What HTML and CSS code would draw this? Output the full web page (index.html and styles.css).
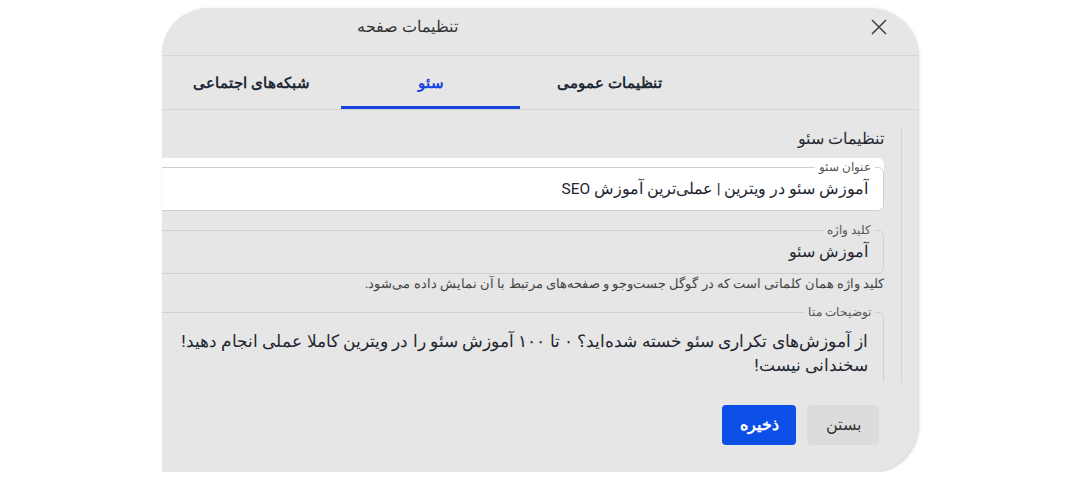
FILE: index.html
```html
<!DOCTYPE html>
<html lang="fa" dir="rtl">
  <head>
    <meta charset="UTF-8" />
    <meta name="viewport" content="width=device-width, initial-scale=1.0" />
    <title>تنظیمات صفحه</title>
    <link rel="stylesheet" href="styles.css">
  </head>
  <body>
    <div class="dialog">
      <div class="dialog-header">
        <button class="close-btn" aria-label="بستن">
          <svg width="18" height="18" viewBox="0 0 18 18">
            <path d="M2 2 L16 16 M16 2 L2 16" stroke="#444" stroke-width="1.6" fill="none" />
          </svg>
        </button>
        <span class="dialog-title">تنظیمات صفحه</span>
      </div>

      <div class="tabs">
        <div class="tab">تنظیمات عمومی</div>
        <div class="tab active">سئو</div>
        <div class="tab">شبکه‌های اجتماعی</div>
      </div>

      <div class="content">
        <h3 class="section-title">تنظیمات سئو</h3>

        <div class="field field-filled">
          <fieldset>
            <legend>عنوان سئو</legend>
            <div class="field-value">آموزش سئو در ویترین | عملی‌ترین آموزش SEO</div>
          </fieldset>
        </div>

        <div class="field">
          <fieldset>
            <legend>کلید واژه</legend>
            <div class="field-value">آموزش سئو</div>
          </fieldset>
          <p class="helper">کلید واژه همان کلماتی است که در گوگل جست‌وجو و صفحه‌های مرتبط با آن نمایش داده می‌شود.</p>
        </div>

        <div class="field">
          <fieldset class="multiline">
            <legend>توضیحات متا</legend>
            <div class="field-value">
              <span class="line">از آموزش‌های تکراری سئو خسته شده‌اید؟ ۰ تا ۱۰۰ آموزش سئو را در ویترین کاملا عملی انجام دهید!</span>
              <span class="line">سخندانی نیست!</span>
            </div>
          </fieldset>
        </div>
      </div>

      <div class="actions">
        <button class="btn btn-light">بستن</button>
        <button class="btn btn-primary">ذخیره</button>
      </div>
    </div>
  </body>
</html>
```

FILE: styles.css
```css
* {
  margin: 0;
  padding: 0;
  box-sizing: border-box;
}
body {
  background: #fff;
  font-family: Roboto, sans-serif;
  color: #1f2630;
  padding: 8px 0 0 162px;
  direction: ltr;
}
.dialog {
  direction: rtl;
  width: 756px;
  height: 464px;
  background: #e6e6e6;
  border-radius: 46px 48px 48px 0;
  box-shadow: 1px 1px 3px rgba(0, 0, 0, 0.18);
  overflow: hidden;
  display: flex;
  flex-direction: column;
}
.dialog-header {
  height: 48px;
  display: flex;
  align-items: center;
  padding-right: 30px;
  padding-bottom: 9px;
  border-bottom: 1px solid #d6d6d6;
}
.close-btn {
  background: none;
  border: none;
  width: 18px;
  height: 18px;
  display: flex;
}
.dialog-title {
  margin-right: 412px;
  font-size: 15.5px;
  color: #333;
}
.tabs {
  height: 54px;
  display: flex;
  padding-right: 219px;
  border-bottom: 1px solid #d4d4d4;
}
.tab {
  width: 181px;
  display: flex;
  align-items: center;
  justify-content: center;
  font-size: 15px;
  font-weight: bold;
  color: #1f2a37;
  border-bottom: 3px solid transparent;
  padding-top: 3px;
}
.tab.active {
  color: #1744e0;
  border-bottom-color: #1744e0;
}
.content {
  margin-top: 17px;
  margin-right: 16px;
  height: 255px;
  overflow: hidden;
  padding-right: 17px;
  border-right: 1px solid #d2d2d2;
}
.section-title {
  font-size: 15.5px;
  font-weight: normal;
  line-height: 24px;
  margin-bottom: 7px;
}
.field {
  margin-left: -20px;
  margin-bottom: 12px;
}
.field-filled {
  background: #fff;
  border-radius: 6px;
  padding-top: 2px;
}
fieldset {
  border: 1px solid #cfcfcf;
  border-radius: 6px;
  padding: 0 15px;
  height: 51px;
}
fieldset.multiline {
  height: 120px;
}
legend {
  font-size: 12px;
  line-height: 14px;
  color: #555;
  padding: 0 4px;
  margin-right: -7px;
}
.field-value {
  font-size: 15.5px;
  line-height: 24px;
  padding-top: 3px;
}
.multiline .field-value {
  font-size: 17.4px;
  padding-top: 10px;
}
.multiline .line {
  display: block;
  white-space: nowrap;
}
.helper {
  font-size: 13px;
  line-height: 18px;
  color: #444;
  margin-left: 20px;
  padding-top: 1px;
}
.actions {
  display: flex;
  gap: 11px;
  padding-right: 39px;
  margin-top: 23px;
}
.btn {
  height: 40px;
  border: none;
  border-radius: 4px;
  font-family: inherit;
  font-size: 15.5px;
}
.btn-light {
  width: 72px;
  background: #dcdcdc;
  color: #333;
  font-weight: 500;
}
.btn-primary {
  width: 74px;
  background: #0b4fe6;
  color: #fff;
  font-weight: bold;
}
```
